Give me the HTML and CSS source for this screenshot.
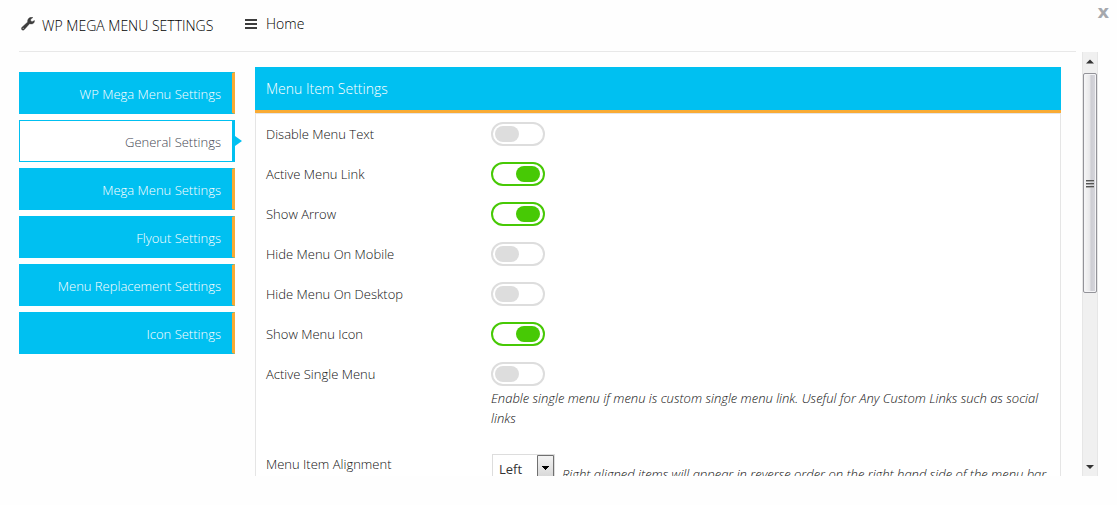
FILE: index.html
```html
<!DOCTYPE html>
<html lang="en">
<head>
<meta charset="utf-8">
<title>WP Mega Menu Settings</title>
<link rel="stylesheet" href="styles.css">
</head>
<body>
<div class="modal">
  <header class="modal-header">
    <h1 class="title">
      <svg class="title-icon" viewBox="0 0 14 14" aria-hidden="true"><path fill="#3d3d3d" stroke="#3d3d3d" stroke-width=".4" fill-rule="evenodd" d="M13.500 3.500c.2 2.300-1.800 4-3.900 3.400l-1-.2L3.400 12.500c-.7.800-1.800.9-2.500.2s-.7-1.800.1-2.500L6.700 5C6.200 2.400 8 .2 10.400.2c.6 0 1.100.1 1.500.3L9.700 2.300v1.500l1.300.900zM2.200 10.800a.6.600 0 1 0 0 1.200.6.600 0 0 0 0-1.200z"/></svg>
      WP MEGA MENU SETTINGS
    </h1>
    <a class="home" href="#home">
      <svg class="home-icon" viewBox="0 0 12 10" aria-hidden="true"><path fill="#3d3d3d" d="M0 0h12v2H0zM0 4h12v2H0zM0 8h12v2H0z"/></svg>
      Home
    </a>
    <button class="close" type="button" aria-label="Close">x</button>
  </header>
  <div class="modal-body">
    <div class="content">
      <nav class="tabs">
        <button class="tab" type="button">WP Mega Menu Settings</button>
        <button class="tab tab-active" type="button">General Settings</button>
        <button class="tab" type="button">Mega Menu Settings</button>
        <button class="tab" type="button">Flyout Settings</button>
        <button class="tab" type="button">Menu Replacement Settings</button>
        <button class="tab" type="button">Icon Settings</button>
      </nav>
      <section class="panel">
        <h2 class="panel-title">Menu Item Settings</h2>
        <div class="panel-rows">
          <div class="row"><label class="label" for="disable-text">Disable Menu Text</label><div class="field"><input class="toggle" type="checkbox" id="disable-text"></div></div>
          <div class="row"><label class="label" for="active-link">Active Menu Link</label><div class="field"><input class="toggle" type="checkbox" id="active-link" checked></div></div>
          <div class="row"><label class="label" for="show-arrow">Show Arrow</label><div class="field"><input class="toggle" type="checkbox" id="show-arrow" checked></div></div>
          <div class="row"><label class="label" for="hide-mobile">Hide Menu On Mobile</label><div class="field"><input class="toggle" type="checkbox" id="hide-mobile"></div></div>
          <div class="row"><label class="label" for="hide-desktop">Hide Menu On Desktop</label><div class="field"><input class="toggle" type="checkbox" id="hide-desktop"></div></div>
          <div class="row"><label class="label" for="show-icon">Show Menu Icon</label><div class="field"><input class="toggle" type="checkbox" id="show-icon" checked></div></div>
          <div class="row row-single"><label class="label" for="single-menu">Active Single Menu</label><div class="field"><input class="toggle" type="checkbox" id="single-menu"><p class="hint">Enable single menu if menu is custom single menu link. Useful for Any Custom Links such as social links</p></div></div>
          <div class="row"><label class="label" for="alignment">Menu Item Alignment</label><div class="field field-inline">
            <span class="select-box">
              <select class="select" id="alignment"><option>Left</option><option>Right</option></select>
              <svg class="select-arrow" viewBox="0 0 17 28" aria-hidden="true"><defs><linearGradient id="arrow-face" x2="0" y2="1"><stop stop-color="#f4f4f4"/><stop offset="1" stop-color="#d0d0d0"/></linearGradient></defs><path fill="url(#arrow-face)" stroke="#707070" d="M.5.500h16v27H.5z"/><path fill="#000" d="M5 11h7v1h-1v1h-1v1H9v1H8v-1H7v-1H6v-1H5z"/></svg>
            </span>
            <p class="hint">Right aligned items will appear in reverse order on the right hand side of the menu bar</p></div></div>
        </div>
      </section>
    </div>
    <div class="scrollbar" aria-hidden="true">
      <svg class="scroll-arrow" viewBox="0 0 16 20"><path fill="#333" d="M8 7l4 4H4z"/></svg>
      <div class="thumb"><svg class="grip" viewBox="0 0 8 9"><path fill="#555" d="M0 1h8v1H0zM0 4h8v1H0zM0 7h8v1H0z"/><path fill="#aaa" d="M0 2h8v1H0zM0 5h8v1H0zM0 8h8v1H0z"/></svg></div>
      <svg class="scroll-arrow scroll-down" viewBox="0 0 16 20"><path fill="#333" d="M4 9h8l-4 4z"/></svg>
    </div>
  </div>
</div>
</body>
</html>
```
FILE: styles.css
```css
* { box-sizing: border-box; }
body {
  margin: 0;
  background: #fefefe;
  color: #111;
  font: 300 13px/20px "Open Sans", "Noto Sans", sans-serif;
}
h1, h2, p { margin: 0; font-size: 13px; font-weight: inherit; }
button { font: inherit; cursor: pointer; }
.modal {
  display: flex;
  flex-direction: column;
  height: 100vh;
  padding: 0 19px 29px;
}
.modal-header {
  display: flex;
  flex: none;
  align-items: flex-start;
  height: 52px;
  color: #000;
  background: linear-gradient(#e8e8e8, #e8e8e8) left bottom / calc(100% - 22px) 1px no-repeat;
}
.title {
  display: flex;
  width: 225px;
  padding-top: 16px;
  font-size: 14px;
  white-space: nowrap;
}
.title-icon { width: 14px; height: 14px; margin: 1px 7px 0 2px; }
.home {
  display: flex;
  align-items: center;
  gap: 9px;
  padding-top: 14px;
  color: #000;
  font-size: 14px;
  text-decoration: none;
}
.home-icon { width: 12px; height: 10px; margin-left: 1px; }
.close {
  margin: 0 -11px 0 auto;
  padding: 0;
  border: 0;
  background: none;
  color: #a5a8ad;
  font: 700 18px/24px "DejaVu Sans", sans-serif;
}
.modal-body {
  display: flex;
  flex: 1;
  gap: 21px;
  min-height: 0;
}
.content {
  display: flex;
  flex: 1;
  align-items: flex-start;
  gap: 20px;
  min-width: 0;
  overflow: hidden;
}
.tabs {
  display: flex;
  flex: none;
  flex-direction: column;
  gap: 6px;
  width: 216px;
  padding-top: 20px;
}
.tab {
  position: relative;
  height: 42px;
  padding: 2px 11px 0 0;
  border: 1px solid #00c0f1;
  border-right: 3px solid #f9ab34;
  background: #00c0f1;
  color: #fff;
  text-align: right;
}
.tab-active {
  border-right-color: #00c0f1;
  background: #fff;
  color: #444652;
}
.tab-active::after {
  content: "";
  position: absolute;
  top: 15px;
  left: 100%;
  margin-left: 3px;
  border: 5px solid transparent;
  border-right: 0;
  border-left: 7px solid #00c0f1;
}
.panel { flex: 1; min-width: 0; padding-top: 15px; }
.panel-title {
  height: 46px;
  padding: 12px 11px;
  border-bottom: 3px solid #f9ab34;
  background: #00c0f1;
  color: #fff;
  font-size: 14px;
}
.panel-rows {
  padding: 0 10px;
  border: 1px solid #e5e5e5;
  background: #fff;
}
.row { display: flex; min-height: 40px; padding: 8px 0; }
.row-single { min-height: 90px; }
.label { flex: none; width: 225px; padding-top: 2px; }
.field { flex: 1; min-width: 0; }
.field-inline { display: flex; gap: 7px; padding-top: 2px; }
.field-inline .hint { padding-top: 10px; white-space: nowrap; }
.hint { padding-top: 2px; font-style: italic; }
.toggle {
  appearance: none;
  display: block;
  width: 54px;
  height: 24px;
  margin: 0;
  padding: 2px;
  border: 2px solid #ddd;
  border-radius: 12px;
  background: #fff;
}
.toggle::before {
  content: "";
  display: block;
  width: 24px;
  height: 16px;
  border-radius: 8px;
  background: #ddd;
}
.toggle:checked { padding-right: 3px; border-color: #47c905; }
.toggle:checked::before { margin-left: auto; background: #47c905; }
.select-box {
  display: flex;
  flex: none;
  position: relative;
  width: 63px;
  height: 30px;
  margin-left: 1px;
}
.select {
  appearance: none;
  width: 100%;
  padding: 0 6px;
  border: 1px solid #ddd;
  border-radius: 0;
  background: #fff;
  color: #333;
  font: 13px/20px "Open Sans", sans-serif;
}
.select-arrow {
  position: absolute;
  top: 1px;
  right: 1px;
  width: 17px;
  height: 28px;
  pointer-events: none;
}
.scrollbar {
  display: flex;
  flex: none;
  flex-direction: column;
  width: 16px;
  border: 1px solid #e6e6e6;
  border-width: 0 1px;
  background: #f0f0f0;
}
.scroll-arrow { flex: none; width: 16px; height: 21px; margin-left: -1px; }
.scroll-down { margin-top: auto; height: 20px; }
.thumb {
  display: flex;
  flex: 0 0 52%;
  align-items: center;
  justify-content: center;
  border: 1px solid #939399;
  border-radius: 2px;
  background: linear-gradient(90deg, #f6f6f6, #e9e9eb 45%, #cdcdd3 60%, #d8d8de);
  box-shadow: inset 0 0 0 1px #f4f4f6;
}
.grip { width: 8px; height: 9px; }
```
